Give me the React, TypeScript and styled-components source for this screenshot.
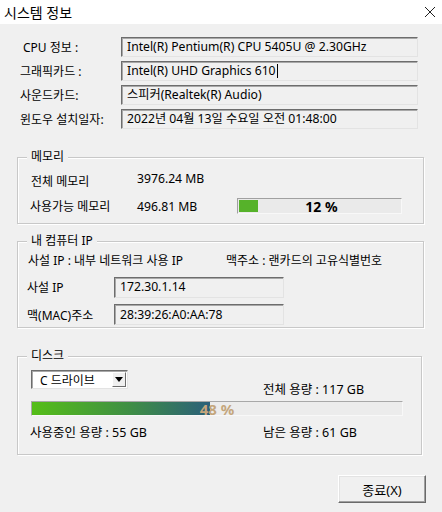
import { createGlobalStyle, styled } from "styled-components";

const GlobalStyle = createGlobalStyle`
  html, body {
    margin: 0;
    padding: 0;
    background: #f0f0f0;
  }
  body {
    font-family: "Noto Sans", "Noto Sans CJK KR", sans-serif;
    color: #000;
  }
`;

const infoRows = [
  { label: "CPU 정보 :", value: "Intel(R) Pentium(R) CPU 5405U @ 2.30GHz", indent: 3 },
  { label: "그래픽카드 :", value: "Intel(R) UHD Graphics 610", indent: 0, caret: true },
  { label: "사운드카드:", value: "스피커(Realtek(R) Audio)", indent: 0 },
  { label: "윈도우 설치일자:", value: "2022년 04월 13일 수요일 오전 01:48:00", indent: 0 },
];

const App = () => {
  const memUsed = 12;
  const diskUsed = 48;

  return (
    <StyledWindow>
      <GlobalStyle />
      <StyledTitleBar>
        <span>시스템 정보</span>
        <svg width="12" height="12" viewBox="0 0 12 12">
          <path d="M1 1 L11 11 M11 1 L1 11" stroke="#222" strokeWidth="1" />
        </svg>
      </StyledTitleBar>

      <StyledInfoGrid>
        {infoRows.map((row) => (
          <StyledInfoRow key={row.label}>
            <StyledLabel $indent={row.indent}>{row.label}</StyledLabel>
            <StyledTextBox>
              {row.value}
              {row.caret && <StyledCaret />}
            </StyledTextBox>
          </StyledInfoRow>
        ))}
      </StyledInfoGrid>

      <StyledGroup $top={28} $height={67}>
        <StyledLegend>메모리</StyledLegend>
        <StyledMemGrid>
          <StyledSmall $nudge={1}>전체 메모리</StyledSmall>
          <StyledValue $lift={3}>3976.24 MB</StyledValue>
          <span />
          <StyledSmall>사용가능 메모리</StyledSmall>
          <StyledValue>496.81 MB</StyledValue>
          <StyledMemBar>
            <StyledMemFill style={{ width: `${memUsed}%` }} />
            <StyledMemText>{memUsed} %</StyledMemText>
          </StyledMemBar>
        </StyledMemGrid>
      </StyledGroup>

      <StyledGroup $top={17} $height={87}>
        <StyledLegend>내 컴퓨터 IP</StyledLegend>
        <StyledIpHint>
          <span>사설 IP : 내부 네트워크 사용 IP</span>
          <span>맥주소 : 랜카드의 고유식별번호</span>
        </StyledIpHint>
        <StyledIpGrid>
          <StyledSmall>사설 IP</StyledSmall>
          <StyledIpBox>172.30.1.14</StyledIpBox>
          <StyledSmall>맥(MAC)주소</StyledSmall>
          <StyledIpBox>28:39:26:A0:AA:78</StyledIpBox>
        </StyledIpGrid>
      </StyledGroup>

      <StyledGroup $top={28} $height={99} $width={405}>
        <StyledLegend>디스크</StyledLegend>
        <StyledDiskTop>
          <StyledSelect>
            <span>C 드라이브</span>
            <StyledSelectArrow>
              <svg width="8" height="5" viewBox="0 0 8 5">
                <path d="M0 0 H8 L4 5 Z" fill="#000" />
              </svg>
            </StyledSelectArrow>
          </StyledSelect>
          <StyledDiskTotal>전체 용량 : 117 GB</StyledDiskTotal>
        </StyledDiskTop>
        <StyledDiskBar>
          <StyledDiskFill style={{ width: `${diskUsed}%` }} />
          <StyledDiskPercent>{diskUsed} %</StyledDiskPercent>
        </StyledDiskBar>
        <StyledDiskBottom>
          <span>사용중인 용량 : 55 GB</span>
          <span>남은 용량 : 61 GB</span>
        </StyledDiskBottom>
      </StyledGroup>

      <StyledFooter>
        <StyledButton>종료(X)</StyledButton>
      </StyledFooter>
    </StyledWindow>
  );
};

export default App;

const StyledWindow = styled.div`
  width: 442px;
  height: 512px;
  background: #f0f0f0;
  display: flex;
  flex-direction: column;
  overflow: hidden;
`;

const StyledTitleBar = styled.div`
  height: 24px;
  background: #fff;
  display: flex;
  align-items: center;
  justify-content: space-between;
  padding: 0 6px 0 4px;
  font-size: 14px;
`;

const StyledInfoGrid = styled.div`
  display: flex;
  flex-direction: column;
  gap: 4px;
  margin: 13px 0 0 20px;
`;

const StyledInfoRow = styled.div`
  display: grid;
  grid-template-columns: 101px 297px;
  align-items: center;
  height: 20px;
`;

const StyledLabel = styled.span<{ $indent: number }>`
  font-size: 12px;
  padding-left: ${(p) => p.$indent}px;
`;

const StyledTextBox = styled.div`
  height: 20px;
  box-sizing: border-box;
  border: 1px solid;
  border-color: #6d6d6d #e3e3e3 #e3e3e3 #6d6d6d;
  box-shadow: inset 1px 1px 0 #a8a8a8;
  background: #f0f0f0;
  font-size: 12.2px;
  line-height: 18px;
  padding-left: 5px;
  display: flex;
  align-items: center;
  white-space: nowrap;
`;

const StyledCaret = styled.span`
  display: inline-block;
  width: 1px;
  height: 14px;
  margin-left: 1px;
  background: #000;
`;

const StyledGroup = styled.div<{ $top: number; $height: number; $width?: number }>`
  position: relative;
  margin: ${(p) => p.$top}px 0 0 17px;
  width: ${(p) => p.$width ?? 407}px;
  height: ${(p) => p.$height}px;
  box-sizing: border-box;
  border: 1px solid #c8c8c8;
  box-shadow: inset 1px 1px 0 #fff, 1px 1px 0 #fff;
  font-size: 12px;
`;

const StyledLegend = styled.span`
  position: absolute;
  top: -9px;
  left: 9px;
  padding: 0 4px;
  background: #f0f0f0;
  font-size: 12px;
  line-height: 16px;
`;

const StyledMemGrid = styled.div`
  display: grid;
  grid-template-columns: 107px 100px 165px;
  grid-template-rows: 22px 22px;
  row-gap: 3px;
  align-items: center;
  padding: 12px 0 0 12px;
`;

const StyledSmall = styled.span<{ $nudge?: number }>`
  font-size: 12px;
  padding-left: ${(p) => p.$nudge ?? 0}px;
`;

const StyledValue = styled.span<{ $lift?: number }>`
  font-size: 12.2px;
  position: relative;
  top: -${(p) => p.$lift ?? 0}px;
`;

const StyledMemBar = styled.div`
  position: relative;
  height: 16px;
  box-sizing: border-box;
  border: 1px solid;
  border-color: #a0a0a0 #f8f8f8 #f8f8f8 #a0a0a0;
  background: #eaeaea;
  padding: 1px;
  display: flex;
`;

const StyledMemFill = styled.div`
  height: 100%;
  background: #56b22a;
`;

const StyledMemText = styled.span`
  position: absolute;
  inset: 0;
  display: flex;
  align-items: center;
  justify-content: center;
  font-size: 14px;
  font-weight: bold;
  padding-left: 4px;
`;

const StyledIpHint = styled.div`
  display: grid;
  grid-template-columns: 198px auto;
  padding: 11px 0 0 10px;
  font-size: 12px;
  line-height: 16px;
`;

const StyledIpGrid = styled.div`
  display: grid;
  grid-template-columns: 87px 170px;
  grid-template-rows: 20px 21px;
  row-gap: 7px;
  align-items: center;
  padding: 8px 0 0 9px;
`;

const StyledIpBox = styled(StyledTextBox)`
  height: 21px;
`;

const StyledDiskTop = styled.div`
  display: flex;
  align-items: flex-start;
  padding: 13px 0 0 13px;
  height: 25px;
  box-sizing: content-box;
`;

const StyledSelect = styled.div`
  width: 97px;
  height: 19px;
  flex: none;
  box-sizing: border-box;
  border: 1px solid;
  border-color: #6d6d6d #e3e3e3 #e3e3e3 #6d6d6d;
  box-shadow: inset 1px 1px 0 #a8a8a8;
  background: #fff;
  display: flex;
  align-items: center;
  justify-content: space-between;
  padding: 0 1px 0 8px;
  font-size: 12px;
`;

const StyledSelectArrow = styled.span`
  width: 14px;
  height: 15px;
  box-sizing: border-box;
  background: #f0f0f0;
  border: 1px solid;
  border-color: #fff #6d6d6d #6d6d6d #fff;
  display: flex;
  align-items: center;
  justify-content: center;
`;

const StyledDiskTotal = styled.span`
  font-size: 12.5px;
  margin: 9px 0 0 135px;
`;

const StyledDiskBar = styled.div`
  position: relative;
  margin: 6px 0 0 13px;
  width: 372px;
  height: 15px;
  box-sizing: border-box;
  border: 1px solid;
  border-color: #a8a8a8 #f8f8f8 #f8f8f8 #a8a8a8;
  background: #ececec;
  display: flex;
`;

const StyledDiskFill = styled.div`
  height: 100%;
  background: linear-gradient(to right, #55be18, #3f8e45 55%, #2b5f7a);
`;

const StyledDiskPercent = styled.span`
  position: absolute;
  inset: 0;
  display: flex;
  align-items: center;
  justify-content: center;
  font-size: 15px;
  font-weight: bold;
  color: #c4a67c;
`;

const StyledDiskBottom = styled.div`
  display: grid;
  grid-template-columns: 233px auto;
  padding: 6px 0 0 12px;
  font-size: 12.5px;
`;

const StyledFooter = styled.div`
  display: flex;
  justify-content: flex-end;
  padding: 20px 16px 0 0;
`;

const StyledButton = styled.button`
  width: 88px;
  height: 28px;
  box-sizing: border-box;
  background: #f0f0f0;
  border: 1px solid;
  border-color: #fff #6a6a6a #6a6a6a #fff;
  box-shadow: inset -1px -1px 0 #a0a0a0, inset 1px 1px 0 #e3e3e3;
  font-family: "Noto Sans", "Noto Sans CJK KR", sans-serif;
  font-size: 13px;
  padding: 0;
`;
